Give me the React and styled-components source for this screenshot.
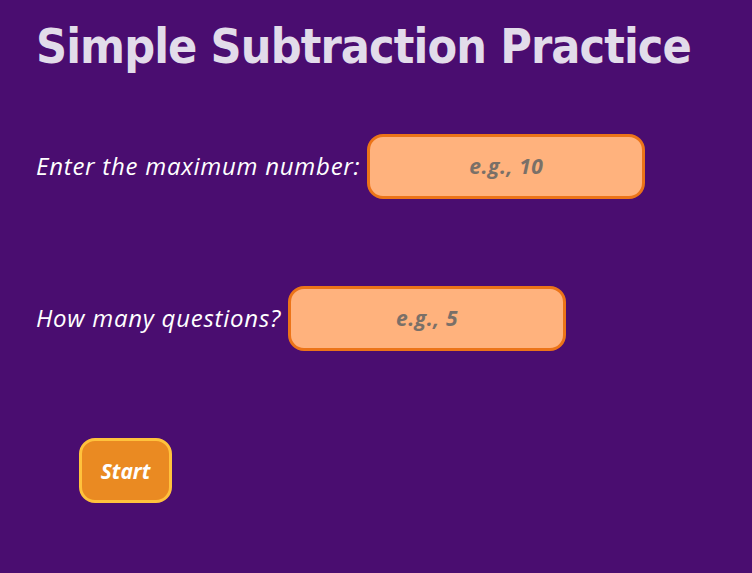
import React from "react";
import styled, { createGlobalStyle } from "styled-components";

const GlobalStyle = createGlobalStyle`
  html, body {
    margin: 0;
    padding: 0;
    background: #4a0d70;
  }
  body {
    font-family: "DejaVu Sans Condensed", "DejaVu Sans", sans-serif;
  }
`;

const Page = styled.div`
  min-height: 573px;
  padding: 18px 36px;
  box-sizing: border-box;
  background: #4a0d70;
`;

const Title = styled.h1`
  margin: 0 0 60px;
  font-family: "DejaVu Sans Condensed", "DejaVu Sans", sans-serif;
  font-size: 48px;
  font-weight: bold;
  letter-spacing: -0.9px;
  white-space: nowrap;
  color: #e2dcea;
  line-height: 56px;
`;

const Row = styled.div`
  display: flex;
  align-items: center;
  height: 64px;
  margin-bottom: 88px;
`;

const Label = styled.label`
  font-family: "Open Sans", sans-serif;
  font-style: italic;
  font-size: 24px;
  letter-spacing: 0.75px;
  color: #ffffff;
  margin-right: 7px;
  position: relative;
  top: -1px;
`;

const Field = styled.input`
  width: 278px;
  height: 65px;
  box-sizing: border-box;
  border: 3px solid #ec7418;
  border-radius: 16px;
  background: #ffb27d;
  text-align: center;
  font-family: "Open Sans", sans-serif;
  font-style: italic;
  font-weight: bold;
  font-size: 21px;
  letter-spacing: 0.6px;
  color: #333;
  outline: none;

  &::placeholder {
    color: #7a7068;
  }
`;

const StartButton = styled.button`
  margin-left: 43px;
  width: 93px;
  height: 65px;
  box-sizing: border-box;
  border: 3px solid #ffc23c;
  border-radius: 16px;
  background: #ea8a22;
  color: #ffffff;
  font-family: "Open Sans", sans-serif;
  font-style: italic;
  font-weight: bold;
  font-size: 21px;
  cursor: pointer;
`;

const App = () => {
  const [max, setMax] = React.useState("");
  const [count, setCount] = React.useState("");

  return (
    <>
      <GlobalStyle />
      <Page>
        <Title>Simple Subtraction Practice</Title>
        <Row>
          <Label htmlFor="max">Enter the maximum number:</Label>
          <Field
            id="max"
            type="text"
            inputMode="numeric"
            placeholder="e.g., 10"
            value={max}
            onChange={(e) => setMax(e.target.value)}
          />
        </Row>
        <Row>
          <Label htmlFor="count">How many questions?</Label>
          <Field
            id="count"
            type="text"
            inputMode="numeric"
            placeholder="e.g., 5"
            value={count}
            onChange={(e) => setCount(e.target.value)}
          />
        </Row>
        <StartButton>Start</StartButton>
      </Page>
    </>
  );
};

export default App;
